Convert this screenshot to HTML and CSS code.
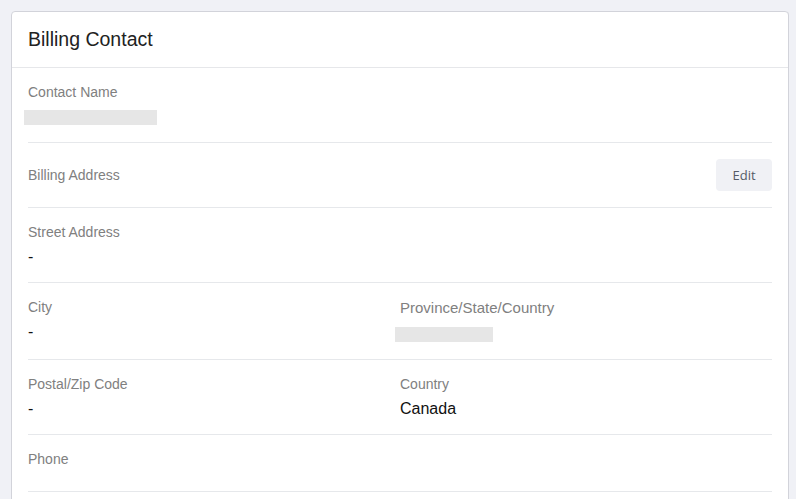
FILE: index.html
```html
<!DOCTYPE html>
<html lang="en">
<head>
    <meta charset="UTF-8">
    <meta name="viewport" content="width=device-width, initial-scale=1.0">
    <title>Billing Contact</title>
    <link rel="stylesheet" href="styles.css">
</head>
<body>
    <div class="card">
        <div class="card-header">
            <h2>Billing Contact</h2>
        </div>

        <div class="card-body">
            <!-- Contact -->
            <div class="row">
                <div class="field">
                    <div class="label">Contact Name</div>
                    <div class="value"><span class="redacted redacted-name"></span></div>
                </div>
            </div>

            <!-- Address header -->
            <div class="row row-action">
                <div class="label">Billing Address</div>
                <button class="btn-edit">Edit</button>
            </div>

            <div class="row">
                <div class="field">
                    <div class="label">Street Address</div>
                    <div class="value">-</div>
                </div>
            </div>

            <div class="row row-split">
                <div class="field">
                    <div class="label">City</div>
                    <div class="value">-</div>
                </div>
                <div class="field">
                    <div class="label label-large">Province/State/Country</div>
                    <div class="value"><span class="redacted redacted-province"></span></div>
                </div>
            </div>

            <div class="row row-split">
                <div class="field">
                    <div class="label">Postal/Zip Code</div>
                    <div class="value">-</div>
                </div>
                <div class="field">
                    <div class="label">Country</div>
                    <div class="value">Canada</div>
                </div>
            </div>

            <div class="row">
                <div class="field">
                    <div class="label">Phone</div>
                    <div class="value"></div>
                </div>
            </div>
        </div>
    </div>
</body>
</html>
```

FILE: styles.css
```css
/* General Styles */
body {
    margin: 11px 7px 0 11px;
    background-color: #f0f1f6;
    font-family: "Liberation Sans", Arial, sans-serif;
    color: #1c1c1c;
}

/* Card */
.card {
    background-color: #fff;
    border: 1px solid #d2d3da;
    border-radius: 4px 4px 0 0;
    box-shadow: 1px 1px 1px rgba(0, 0, 0, 0.08);
}

.card-header {
    height: 55px;
    display: flex;
    align-items: center;
    padding: 0 16px;
    border-bottom: 1px solid #e6e7ea;
}

.card-header h2 {
    margin: 0;
    font-size: 19.5px;
    font-weight: normal;
    color: #222;
}

.card-body {
    padding: 0 16px 24px;
}

/* Rows */
.row {
    padding: 14px 0 16px;
    border-bottom: 1px solid #e6e8eb;
}

.row-split {
    display: grid;
    grid-template-columns: 1fr 1fr;
}

.row-action {
    display: flex;
    align-items: center;
    justify-content: space-between;
    padding: 16px 0;
}

.label {
    font-size: 14px;
    line-height: 20px;
    color: #808080;
}

.label-large {
    font-size: 15px;
    line-height: 22px;
}

.value {
    margin-top: 6px;
    font-size: 16px;
    line-height: 18px;
    color: #111;
}

.redacted {
    display: inline-block;
    height: 15px;
    margin-top: 2px;
    margin-left: -4px;
    vertical-align: top;
    background-color: #e6e6e6;
}

.redacted-name {
    width: 133px;
}

.redacted-province {
    width: 98px;
    margin-left: -5px;
}

/* Button */
.btn-edit {
    height: 32px;
    width: 56px;
    padding: 0;
    border: none;
    border-radius: 4px;
    background-color: #f0f1f5;
    color: #555a66;
    font-family: "Open Sans", sans-serif;
    font-size: 13px;
    cursor: pointer;
}

.btn-edit:hover {
    background-color: #e6e7ee;
}
```
